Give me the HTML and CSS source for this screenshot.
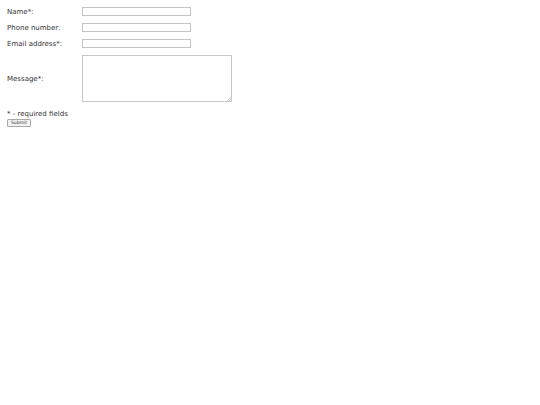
FILE: index.html
```html
<!DOCTYPE html>
<html>
<head>
<meta charset="utf-8">
<link rel="stylesheet" href="styles.css">
</head>
<body>
<form class="form">
  <div class="row">
    <label class="label">Name*:</label>
    <input class="field" type="text">
  </div>
  <div class="row">
    <label class="label">Phone number:</label>
    <input class="field" type="text">
  </div>
  <div class="row">
    <label class="label">Email address*:</label>
    <input class="field" type="text">
  </div>
  <div class="row row-msg">
    <label class="label">Message*:</label>
    <div class="area-wrap">
      <textarea class="area"></textarea>
      <svg class="grip" width="4" height="4" viewBox="0 0 4 4"><path d="M4 0L0 4M4 2L2 4" stroke="#aaa" stroke-width="0.6"/></svg>
    </div>
  </div>
  <div class="note">* - required fields</div>
  <button class="submit" type="button">Submit</button>
</form>
</body>
</html>
```
FILE: styles.css
```css
html, body {
  margin: 0;
  padding: 0;
  background: #fff;
}
body {
  font-family: "DejaVu Sans", Verdana, sans-serif;
  color: #333;
}
.form {
  padding: 7px 0 0 7px;
  display: flex;
  flex-direction: column;
  align-items: flex-start;
}
.row {
  display: flex;
  align-items: center;
  height: 9px;
  margin-bottom: 7px;
}
.row-msg {
  height: 47px;
  margin-bottom: 8px;
}
.label {
  width: 75px;
  font-size: 7px;
  line-height: 9px;
  padding-top: 1px;
}
.field {
  box-sizing: border-box;
  width: 109px;
  height: 9px;
  margin: 0;
  padding: 0;
  border: 1px solid #c4c4c4;
  background: #fff;
}
.area-wrap {
  position: relative;
  width: 150px;
  height: 47px;
}
.area {
  display: block;
  box-sizing: border-box;
  width: 150px;
  height: 47px;
  margin: 0;
  padding: 0;
  border: 1px solid #c8c8c8;
  background: #fff;
  resize: none;
}
.grip {
  position: absolute;
  right: 1px;
  bottom: 1px;
}
.note {
  font-size: 7px;
  line-height: 9px;
}
.submit {
  box-sizing: border-box;
  margin: 0;
  height: 8px;
  width: 24px;
  padding: 0;
  font-family: "DejaVu Sans", Verdana, sans-serif;
  font-size: 4.5px;
  line-height: 6px;
  color: #333;
  background: #f2f2f2;
  border: 1px solid #aaa;
  border-radius: 1px;
}
```
